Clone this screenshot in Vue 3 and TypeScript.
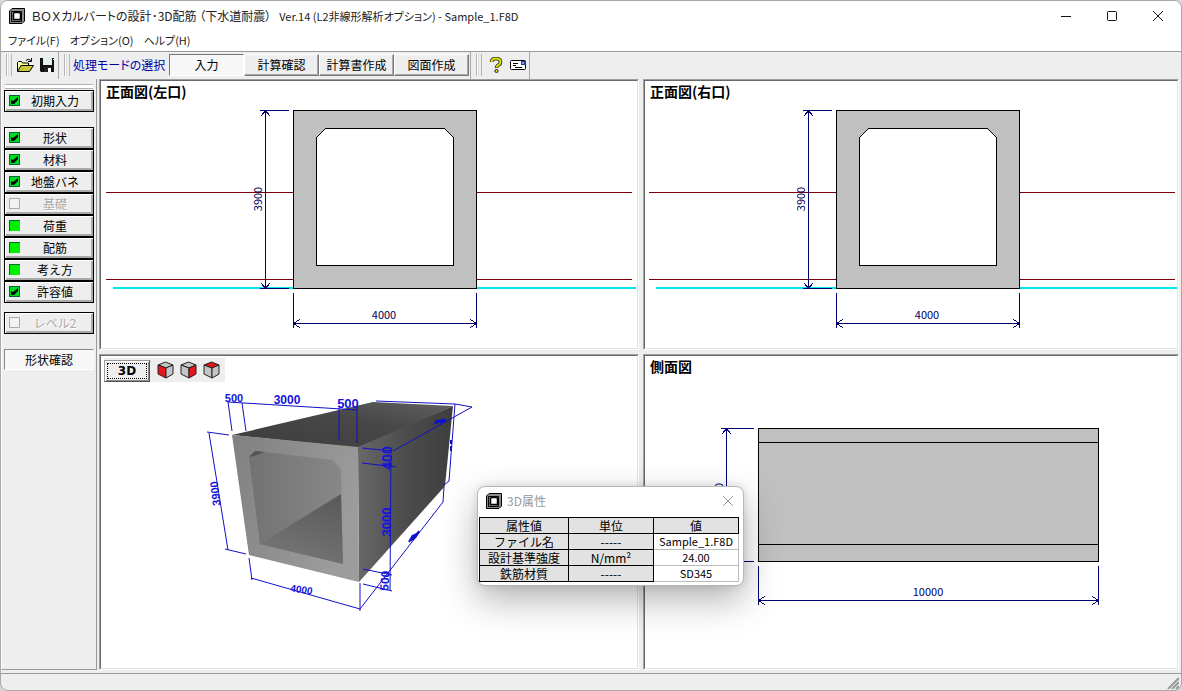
<script setup lang="ts">
import { ref } from 'vue'

type Mark = 'done' | 'open' | 'off'
interface Step { label: string; mark: Mark }

const modes = ['入力', '計算確認', '計算書作成', '図面作成']
const mode = ref('入力')

const groups: Step[][] = [
  [{ label: '初期入力', mark: 'done' }],
  [
    { label: '形状', mark: 'done' },
    { label: '材料', mark: 'done' },
    { label: '地盤バネ', mark: 'done' },
    { label: '基礎', mark: 'off' },
    { label: '荷重', mark: 'open' },
    { label: '配筋', mark: 'open' },
    { label: '考え方', mark: 'open' },
    { label: '許容値', mark: 'done' },
  ],
  [{ label: 'レベル2', mark: 'off' }],
]

const sections = [
  { title: '正面図(左口)', box: '101 81 536 267', shift: 0 },
  { title: '正面図(右口)', box: '645 81 532 267', shift: 543 },
]

const cubes = [
  { name: '左面', left: '#e8141c', right: '#c4c4c4', top: '#c4c4c4' },
  { name: '右面', left: '#c4c4c4', right: '#e8141c', top: '#c4c4c4' },
  { name: '上面', left: '#c4c4c4', right: '#c4c4c4', top: '#e8141c' },
]

const rows = [
  ['ファイル名', '-----', 'Sample_1.F8D'],
  ['設計基準強度', 'N/mm²', '24.00'],
  ['鉄筋材質', '-----', 'SD345'],
]

const showProps = ref(true)
</script>

<template>
  <div class="window">
    <header class="titlebar">
      <svg class="logo" viewBox="0 0 16 16" aria-hidden="true">
        <path d="M3 .5h12.500V13L13 15.500H.5V3z" fill="#8c8c8c" stroke="#000" />
        <path d="M2.500 3.500h10v10h-10z" fill="#888" stroke="#000" />
        <path d="M4.500 5.500l1-1h5l1 1v6h-7z" fill="#fff" stroke="#000" stroke-width="1.500" />
      </svg>
      <h1>ＢＯＸカルバートの設計･3D配筋 （下水道耐震）<span>Ver.14 (L2非線形解析オプション) - Sample_1.F8D</span></h1>
      <div class="caption">
        <button type="button" aria-label="最小化"><svg viewBox="0 0 12 12"><path d="M1 6.500h10" /></svg></button>
        <button type="button" aria-label="最大化"><svg viewBox="0 0 12 12"><rect x="1.500" y="1.500" width="9" height="9" rx="1" /></svg></button>
        <button type="button" aria-label="閉じる"><svg viewBox="0 0 12 12"><path d="M1 1l10 10M11 1L1 11" /></svg></button>
      </div>
    </header>

    <nav class="menu">
      <button type="button">ファイル(F)</button>
      <button type="button">オプション(O)</button>
      <button type="button">ヘルプ(H)</button>
    </nav>

    <div class="toolbar">
      <div class="band files">
        <i class="grip"></i>
        <button type="button" class="icon" aria-label="開く">
          <svg viewBox="0 0 17 16">
            <path d="M9 3.500q2-2.500 5 0M14.500 1v3.500H11" fill="none" stroke="#000" />
            <path d="M.5 14.500v-9l1-1h3l1 1.500h6v3" fill="#ffffa0" stroke="#000" />
            <path d="M.5 14.500l3.500-6h12.500l-4 6z" fill="#c8c83c" stroke="#000" />
          </svg>
        </button>
        <button type="button" class="icon" aria-label="保存">
          <svg viewBox="0 0 17 16">
            <path d="M1 1h14v14H2l-1-1z" fill="#111" />
            <path d="M4 1h9v7H4z" fill="#e4f0f0" />
            <path d="M5 10h7v5H5z" fill="#222" /><path d="M9 11h3v4H9z" fill="#fff" />
            <path d="M14 2h1v1h-1z" fill="#fff" />
          </svg>
        </button>
      </div>
      <div class="band modes">
        <i class="grip"></i>
        <span class="mode-label">処理モードの選択</span>
        <button
          v-for="m in modes" :key="m" type="button" class="mode"
          :class="{ pressed: m === mode }" :aria-pressed="m === mode" @click="mode = m"
        >{{ m }}</button>
      </div>
      <div class="band help">
        <i class="grip"></i>
        <button type="button" class="icon" aria-label="ヘルプ">
          <svg viewBox="0 0 17 16">
            <path d="M3.500 5q0-3.500 4.500-3.500T12.500 5q0 2-2 3T8.500 11" fill="none" stroke="#222" stroke-width="3.500" />
            <path d="M3.500 5q0-3.500 4.500-3.500T12.500 5q0 2-2 3T8.500 10.500" fill="none" stroke="#e2e200" stroke-width="2" />
            <circle cx="8.500" cy="14" r="1.600" fill="#e2e200" stroke="#222" />
          </svg>
        </button>
        <button type="button" class="icon" aria-label="メール">
          <svg viewBox="0 0 17 16">
            <rect x=".5" y="3.500" width="15" height="9" rx="1" fill="#fff" stroke="#000" />
            <path d="M11 4h5v4h-5z" fill="#1240b8" /><path d="M12 5h2v2h-2z" fill="#8ac" />
            <path d="M3 6.500h5M3 8.500h3M5 10.500h7" stroke="#000" />
          </svg>
        </button>
      </div>
    </div>

    <div class="body">
      <aside class="side">
        <i class="hgrip"></i>
        <div v-for="(g, i) in groups" :key="i" class="group">
          <button v-for="s in g" :key="s.label" type="button" class="step" :disabled="s.mark === 'off'">
            <svg class="mark" :class="s.mark" viewBox="0 0 11 11" aria-hidden="true">
              <rect class="face" x="0" y="0" width="11" height="11" />
              <path class="edge" d="M.5 11V.5H11" />
              <path v-if="s.mark !== 'open'" class="rim" d="M.5 10.500h10V.5" />
              <path v-if="s.mark === 'done'" class="tick" d="M2 5l2 1 5-4v3L5 9H2z" />
            </svg>
            <span>{{ s.label }}</span>
          </button>
        </div>
        <button type="button" class="confirm">形状確認</button>
      </aside>

      <main class="panes">
        <section v-for="s in sections" :key="s.title" class="pane">
          <svg class="drawing" :viewBox="s.box">
            <g :transform="`translate(${s.shift} 0)`">
              <path d="M113 288h523" stroke="#00e5ee" stroke-width="2" />
              <g transform="translate(.5 .5)">
                <path class="ground" d="M106 192h187M476 192h155M106 279h187M476 279h155" />
                <path class="solid" d="M293 110h183v178H293z" />
                <path class="hole" d="M316 137l9-9h119l9 9v128H316z" />
                <path class="dim" d="M260 110h28M260 288h28M265 110v178M261 115l4-5 4 5M261 283l4 5 4-5" />
                <path class="dim" d="M293 293v34M476 293v34M293 323h183M299 319l-6 4 6 4M470 319l6 4-6 4" />
              </g>
              <text class="num" transform="translate(262 199) rotate(-90)">3900</text>
              <text class="num" x="384" y="319">4000</text>
            </g>
          </svg>
          <h2>{{ s.title }}</h2>
        </section>

        <section class="pane">
          <svg class="drawing" viewBox="101 356 536 312" role="img" aria-label="3D">
            <defs>
              <linearGradient id="topFace" x1="0" y1="1" x2="1" y2="0"><stop offset="0" stop-color="#3c3c3c" /><stop offset=".6" stop-color="#484848" /><stop offset="1" stop-color="#606060" /></linearGradient>
              <linearGradient id="sideFace" x1="0" y1="0" x2="1" y2="0"><stop offset="0" stop-color="#686868" /><stop offset=".5" stop-color="#4c4c4c" /><stop offset="1" stop-color="#3e3e3e" /></linearGradient>
              <linearGradient id="frontFace" x1="0" y1="0" x2="1" y2=".4"><stop offset="0" stop-color="#808080" /><stop offset="1" stop-color="#9c9c9c" /></linearGradient>
              <linearGradient id="wall" x1="0" y1="0" x2="1" y2="0"><stop offset="0" stop-color="#727272" /><stop offset="1" stop-color="#888" /></linearGradient>
              <linearGradient id="floor" x1="1" y1="0" x2=".6" y2="1"><stop offset="0" stop-color="#585858" /><stop offset="1" stop-color="#747474" /></linearGradient>
            </defs>
            <path fill="url(#topFace)" d="M232 435l141-33 80 4-94 42z" />
            <path fill="url(#sideFace)" d="M358 447l95-41-8 80-86 96z" />
            <path fill="url(#frontFace)" d="M232 435l126 12 1 135-110-27z" />
            <path fill="url(#wall)" d="M249 457l6-6 78 9 8 9 2 95-83-20z" />
            <path fill="url(#floor)" d="M260 544l81-50 2 70z" />
            <path fill="#555" d="M249 457l6-6 10 1-11 4z" />
            <g class="dim3">
              <path d="M228 402l130 8M228 402l4 29M242 403l4 28M339 408v33M357 407v36" />
              <path d="M207 432l22 3M209 433l19 117M225 549l21 5" />
              <path d="M249 558l3 22M251 578l109 31M360 583v28M360 609l83-107M444 487l-1 15" />
              <path d="M362 448l30 3M362 463l34 4M391 450l-1 141M363 569l29 6M363 584l29 7" />
              <path d="M393 451l79-44M455 404l17 3M376 401l79 3M455 404l-6 77-5 4" />
              <path class="bunch" d="M434 424l6-4M437 423l6-4M440 423l6-4M435 421l11 1M409 542l4-7M411 541l4-7M413 540l4-7M415 538l4-7M451 440v4M451 446v5" />
            </g>
            <g class="num3">
              <text x="234" y="402" font-size="11">500</text>
              <text x="287" y="404" font-size="12">3000</text>
              <text x="348" y="408" font-size="13">500</text>
              <text transform="translate(392 458) rotate(-90)" font-size="14">400</text>
              <text transform="translate(391 522) rotate(-90)" font-size="13">3000</text>
              <text transform="translate(389 581) rotate(-86)" font-size="12">500</text>
              <text transform="translate(219 493) rotate(-97)" font-size="11">3900</text>
              <text transform="translate(301 593) rotate(8)" font-size="10">4000</text>
            </g>
          </svg>
          <div class="view-tools">
            <button type="button" class="btn3d"><span>3D</span></button>
            <button v-for="c in cubes" :key="c.name" type="button" class="cube" :aria-label="c.name">
              <svg viewBox="0 0 17 18">
                <g stroke="#222" stroke-linejoin="round">
                  <path :fill="c.top" d="M8.500 1l7.500 3-7 3L1 4z" />
                  <path :fill="c.left" d="M1 4l8 3v10l-8-4z" />
                  <path :fill="c.right" d="M9 7l7-3v9l-7 4z" />
                </g>
              </svg>
            </button>
          </div>
        </section>

        <section class="pane">
          <svg class="drawing" viewBox="645 356 532 312">
            <g transform="translate(.5 .5)">
              <path class="solid" d="M758 428h340v133H758zM758 442h340M758 544h340" />
              <path class="dim" d="M721 428h32M721 561h32M726 428v133M722 433l4-5 4 5M722 556l4 5 4-5" />
              <path class="dim" d="M758 566v38M1098 566v38M758 600h340M764 596l-6 4 6 4M1092 596l6 4-6 4" />
            </g>
            <text class="num" transform="translate(723 495) rotate(-90)">3900</text>
            <text class="num" x="928" y="596">10000</text>
          </svg>
          <h2>側面図</h2>
        </section>
      </main>
    </div>

    <footer class="status">
      <svg viewBox="0 0 12 12" aria-hidden="true"><path d="M1 12L12 1M5 12l7-7M9 12l3-3" /></svg>
    </footer>

    <div v-if="showProps" class="dialog" role="dialog" aria-label="3D属性">
      <div class="dialog-title">
        <svg class="logo" viewBox="0 0 16 16" aria-hidden="true">
          <path d="M3 .5h12.500V13L13 15.500H.5V3z" fill="#8c8c8c" stroke="#000" />
          <path d="M2.500 3.500h10v10h-10z" fill="#888" stroke="#000" />
          <path d="M4.500 5.500l1-1h5l1 1v6h-7z" fill="#fff" stroke="#000" stroke-width="1.500" />
        </svg>
        <span>3D属性</span>
        <button type="button" aria-label="閉じる" @click="showProps = false">
          <svg viewBox="0 0 12 12"><path d="M1 1l10 10M11 1L1 11" /></svg>
        </button>
      </div>
      <table>
        <thead><tr><th>属性値</th><th>単位</th><th>値</th></tr></thead>
        <tbody>
          <tr v-for="r in rows" :key="r[0]"><th>{{ r[0] }}</th><th>{{ r[1] }}</th><td>{{ r[2] }}</td></tr>
        </tbody>
      </table>
    </div>
  </div>
</template>

<style>
body { background: #d8d8d8; }
</style>

<style scoped>
* { box-sizing: border-box; }
.window {
  position: relative;
  display: flex;
  flex-direction: column;
  min-height: 100vh;
  border: 1px solid #a8a8a8;
  border-radius: 8px;
  overflow: hidden;
  background: #eee;
  color: #000;
  font: 12px/16px "Noto Sans CJK JP", "Noto Sans", sans-serif;
}
button { font: inherit; color: inherit; padding: 0; margin: 0; border: 0; background: none; }
h1, h2 { margin: 0; font-weight: normal; font-size: 12px; }

.titlebar { display: flex; align-items: center; height: 29px; padding-left: 8px; background: #fff; }
.logo { width: 16px; height: 16px; flex: none; }
.titlebar h1 { margin-left: 6px; flex: 1; white-space: nowrap; font-feature-settings: "palt"; color: #222; }
.titlebar h1 span { margin-left: 8px; font-size: 11px; }
.caption { display: flex; }
.caption button { width: 46px; height: 28px; }
.caption svg { width: 12px; height: 12px; display: block; margin: auto; fill: none; stroke: #111; }

.menu { display: flex; gap: 10px; height: 21px; padding: 0 7px 2px; background: #fff; font-size: 11px; font-feature-settings: "palt"; color: #222; }

.toolbar { display: flex; height: 28px; border-top: 1px solid #999; }
.band { display: flex; align-items: center; border-right: 1px solid #a8a8a8; padding-bottom: 1px; }
.files { width: 58px; padding-left: 5px; }
.modes { width: 412px; padding-left: 5px; }
.help { width: 59px; padding-left: 5px; }
.grip { width: 6px; height: 22px; margin-right: 3px; border: solid #b4b4b4; border-width: 0 1px; background: linear-gradient(90deg, #fff 1px, #ccc 1px, #eee 2px); flex: none; }
.icon { width: 22px; height: 20px; }
.icon svg { width: 17px; height: 16px; display: block; margin: auto; }
.mode-label { width: 96px; color: #0000a8; white-space: nowrap; font-feature-settings: "palt"; }
.mode { width: 75px; height: 22px; border: 1px solid; border-color: #fff #777 #777 #fff; box-shadow: inset -1px -1px #aaa; }
.mode.pressed { border-color: #777 #fff #fff #777; box-shadow: none; background: #f7f7f7; }

.body { display: flex; flex: 1; }
.side { width: 96px; margin-right: 2px; padding: 5px 3px 0 3px; border: solid #999; border-width: 0 1px 1px 0; border-left: 1px solid #fff; flex: none; }
.hgrip { display: block; height: 5px; margin-bottom: 1px; border: solid #b4b4b4; border-width: 1px 0; background: #fff; }
.group { margin-bottom: 15px; width: 90px; margin-left: -1px; }
.group:nth-of-type(2) { margin-bottom: 9px; }
.group:nth-of-type(3) { margin-bottom: 15px; }
.step { display: flex; align-items: center; width: 90px; height: 22px; padding: 0 3px 1px 4px; border: 1px solid #000; box-shadow: inset 1px 1px #fff, inset -2px -2px #aaa; }
.step span { flex: 1; text-align: center; line-height: 18px; }
.step:disabled { color: #aaa; text-shadow: 1px 1px #fff; }
.mark { width: 11px; height: 11px; flex: none; }
.mark .edge, .mark .rim { fill: none; stroke: #063; }
.mark.open .face { fill: #00f000; }
.mark.done .face { fill: #0d2; }
.mark.off .face { fill: #f2f2f2; }
.mark.off .edge, .mark.off .rim { stroke: #aaa; }
.mark .tick { fill: #000; }
.confirm { width: 90px; height: 21px; margin-left: -1px; border: 1px solid; border-color: #888 #fff #fff #888; background: #f7f7f7; }

.panes { flex: 1; display: grid; grid-template: minmax(0, 271fr) minmax(0, 316fr) / minmax(0, 540fr) minmax(0, 536fr); gap: 4px; padding-right: 2px; }
.pane { display: grid; grid-template: minmax(0, 1fr) / minmax(0, 1fr); background: #fff; border: 1px solid; border-color: #a0a0a0 #fff #fff #a0a0a0; position: relative; }
.pane::after { content: ""; position: absolute; inset: 0; border: 1px solid; border-color: #696969 #e3e3e3 #e3e3e3 #696969; pointer-events: none; }
.drawing { grid-area: 1 / 1; width: 100%; height: 100%; min-height: 0; padding: 1px; display: block; }
.pane h2 { grid-area: 1 / 1; align-self: start; justify-self: start; padding: 1px 6px; font-weight: bold; font-size: 14px; line-height: 20px; }

.solid, .hole, .ground, .dim { shape-rendering: crispEdges; stroke-width: 1; stroke-linecap: square; }
.solid { fill: #c0c0c0; stroke: #000; }
.hole { fill: #fff; stroke: #000; }
.ground { fill: none; stroke: #780008; }
.dim { fill: none; stroke: #000070; }
.num { font-size: 11px; fill: #000060; text-anchor: middle; }
.dim3 path { fill: none; stroke: #1010c8; }
.dim3 .bunch { stroke-width: 2; }
.num3 { font-family: "Liberation Sans", sans-serif; font-weight: bold; fill: #1414dc; text-anchor: middle; }

.view-tools { grid-area: 1 / 1; align-self: start; justify-self: start; display: flex; align-items: flex-end; margin: 3px 4px; padding-right: 2px; height: 24px; background: #eee; }
.btn3d { width: 46px; height: 22px; margin-right: 4px; padding: 2px; border: 1px solid; border-color: #999 #555 #555 #999; box-shadow: inset 1px 1px #fff, inset -1px -1px #888; font: bold 12px/14px "DejaVu Sans", sans-serif; }
.btn3d span { display: block; border: 1px dotted #000; }
.cube { width: 23px; height: 20px; align-self: center; }
.cube svg { width: 17px; height: 18px; display: block; margin: auto; }

.status { display: flex; justify-content: flex-end; align-items: flex-end; height: 17px; margin-top: 3px; border-top: 1px solid #999; padding: 0 2px 1px; }
.status svg { width: 12px; height: 12px; fill: none; stroke: #999; stroke-width: 2; }

.dialog { position: absolute; left: 476px; top: 485px; width: 267px; border: 1px solid #b8b8b8; border-radius: 8px; background: #fff; box-shadow: 0 14px 36px rgba(0, 0, 0, .3), 0 0 8px rgba(0, 0, 0, .12); padding-bottom: 3px; overflow: hidden; }
.dialog-title { display: flex; align-items: center; height: 30px; padding: 0 9px 2px 8px; color: #999; }
.dialog-title span { flex: 1; margin-left: 5px; }
.dialog-title button svg { width: 12px; height: 12px; display: block; fill: none; stroke: #999; }
table { border-collapse: collapse; table-layout: fixed; width: 260px; margin-left: 1px; line-height: 15px; border-top: 1px solid #888; }
th, td { height: 16px; padding: 0; font-weight: normal; text-align: center; white-space: nowrap; }
th { background: #e2e2e2; border: 1px solid #000; }
th:first-child { width: 89px; }
th:nth-child(2) { width: 85px; }
td { border: 1px solid #bbb; border-left-color: #000; font-size: 11px; }
</style>
